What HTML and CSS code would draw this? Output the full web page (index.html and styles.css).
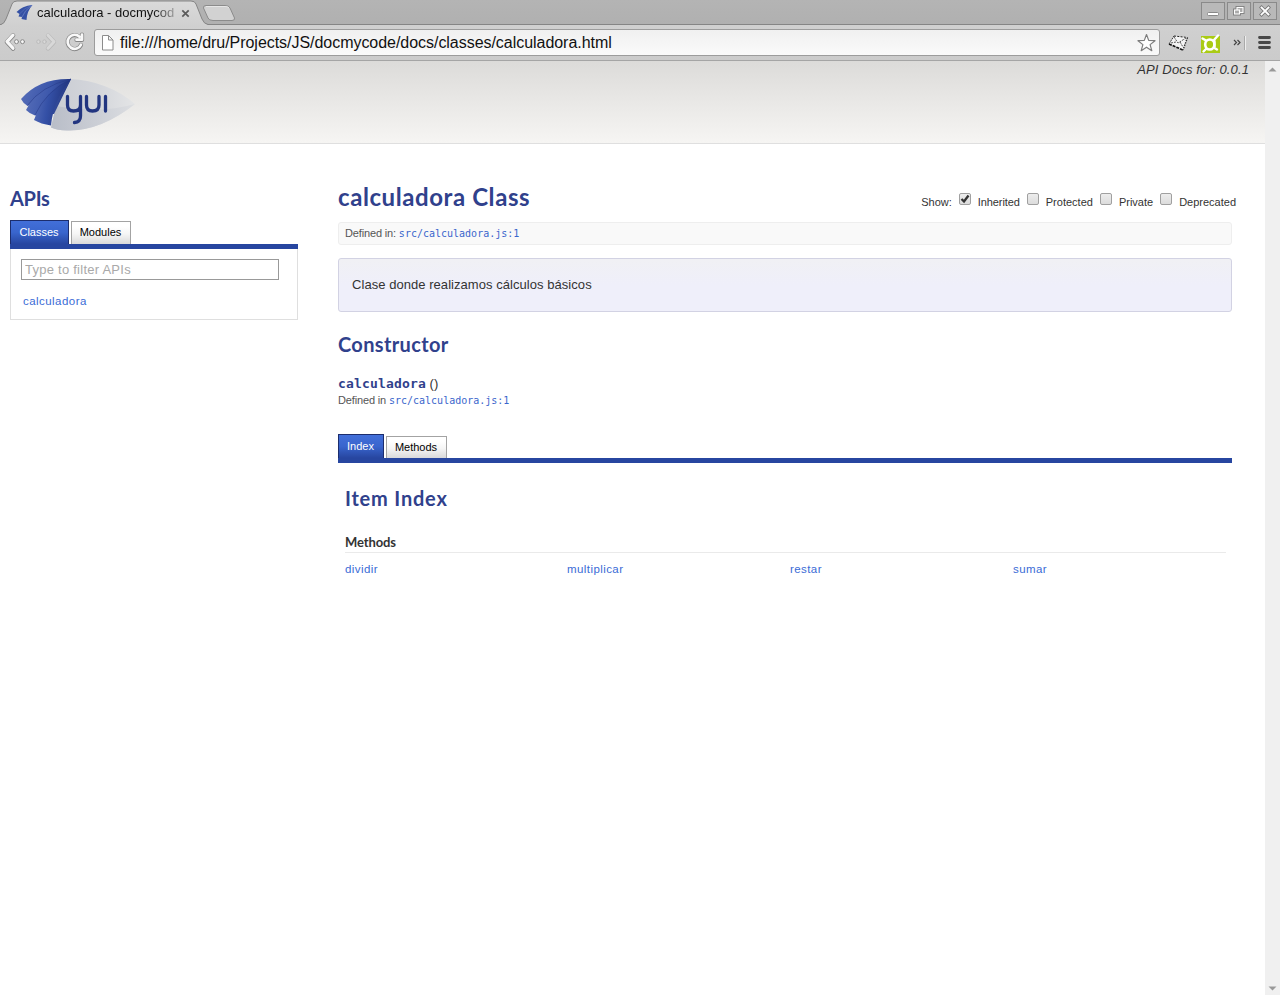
FILE: index.html
```
<!DOCTYPE html>
<html lang="en">
<head>
<meta charset="utf-8">
<title>calculadora - docmycode</title>
<link rel="stylesheet" href="styles.css">
</head>
<body>
<div class="browser">
  <div class="titlebar">
    <svg class="tabshape" width="240" height="25" viewBox="0 0 240 25">
      <defs>
        <linearGradient id="tabg" x1="0" y1="0" x2="0" y2="1"><stop offset="0" stop-color="#dadada"/><stop offset="1" stop-color="#d0d0d0"/></linearGradient>
      </defs>
      <path d="M0 24.500H1Q4 24 6 19L12 4Q13 1 17 1H191Q195 1 196 4L202 19Q204 24 208 24.500V26H0Z" fill="url(#tabg)" stroke="#858585"/>
      <path d="M206 5.500H225Q229 5.500 230 8L234.500 18Q235 20.500 232 20.500H213Q209 20.500 208 18L203.500 8Q203 5.500 206 5.500Z" fill="#d2d2d2" stroke="#8b8b8b"/>
      <path d="M206 6.500H225Q228 6.500 229 8" fill="none" stroke="#e6e6e6"/>
    </svg>
    <div class="tab">
      <svg width="17" height="16" viewBox="0 0 17 16">
        <path d="M0.500 7Q6 1 16.500 0Q11 6 10.500 15L5.500 14L6 12L2.500 11.500L3.500 9Z" fill="#3551a4"/>
        <path d="M3.500 9Q8 3 16 0Q8 6 6 12M6 12Q9 5 16 0" fill="none" stroke="#5f77bf" stroke-width=".6"/>
      </svg>
      <span class="tabtitle">calculadora - docmycod</span>
      <svg class="tabclose" width="9" height="9" viewBox="0 0 9 9"><path d="M1.300 1.300L7.700 7.700M7.700 1.300L1.300 7.700" stroke="#5a5a5a" stroke-width="1.700"/></svg>
    </div>
    <div class="winbtns">
      <svg width="24" height="18" viewBox="0 0 24 18"><rect x=".5" y=".5" width="23" height="17" fill="#b9b9b9" stroke="#8a8a8a"/><rect x="6.500" y="10.500" width="11" height="3" rx="1" fill="#fff" stroke="#888"/></svg>
      <svg width="24" height="18" viewBox="0 0 24 18"><rect x=".5" y=".5" width="23" height="17" fill="#b9b9b9" stroke="#8a8a8a"/><g fill="none" stroke="#808080" stroke-width="3"><rect x="10" y="5.500" width="6" height="5"/><rect x="7.500" y="8" width="5" height="4"/></g><rect x="10" y="5.500" width="6" height="5" fill="#aaa" stroke="#fff" stroke-width="1.100"/><rect x="7.500" y="8" width="5" height="4" fill="#aaa" stroke="#fff" stroke-width="1.100"/></svg>
      <svg width="24" height="18" viewBox="0 0 24 18"><rect x=".5" y=".5" width="23" height="17" fill="#b9b9b9" stroke="#8a8a8a"/><path d="M8.500 5.500L15.500 12.500M15.500 5.500L8.500 12.500" stroke="#777" stroke-width="3.500" stroke-linecap="square"/><path d="M8.500 5.500L15.500 12.500M15.500 5.500L8.500 12.500" stroke="#fff" stroke-width="1.800" stroke-linecap="square"/></svg>
    </div>
  </div>

  <div class="toolbar">
    <svg class="nav" width="90" height="30" viewBox="0 0 90 30">
      <g fill="none" stroke-linecap="round" stroke-linejoin="round">
        <path d="M13 7.500L7 14L13 20.500" stroke="#858585" stroke-width="4.600"/>
        <path d="M13 7.200L7 13.700L13 20.200" stroke="#f8f8f8" stroke-width="3.200"/>
        <g fill="#f6f6f6" stroke="#8b8b8b"><circle cx="16.500" cy="13.700" r="2"/><circle cx="22.500" cy="13.700" r="2"/></g>
        <path d="M48 7.500L54 14L48 20.500" stroke="#b8b8b8" stroke-width="4.300"/>
        <path d="M48 7.200L54 13.700L48 20.200" stroke="#d8d8d8" stroke-width="3.100"/>
        <g fill="#d8d8d8" stroke="#bcbcbc"><circle cx="38.500" cy="13.700" r="1.800"/><circle cx="44.500" cy="13.700" r="1.800"/></g>
        <path d="M79.500 9A7 7 0 1 0 81 17M82 6.500V12H76.500" stroke="#858585" stroke-width="4.200"/>
        <path d="M79.500 8.700A7 7 0 1 0 81 16.700M82 6.500V11.700H76.500" stroke="#f8f8f8" stroke-width="2.700"/>
      </g>
    </svg>
    <div class="omnibox">
      <svg width="13" height="16" viewBox="0 0 13 16"><path d="M1.500 .5H7.500L12 5V15H1.500ZM7.500 .5V5H12" fill="#fff" stroke="#8c8c8c" stroke-linejoin="round"/></svg>
      <span class="url">file:///home/dru/Projects/JS/docmycode/docs/classes/calculadora.html</span>
      <svg width="20" height="20" viewBox="0 0 20 20"><path d="M10.500 1.500L12.700 7.400L19 7.700L14.100 11.600L15.800 17.700L10.500 14.200L5.200 17.700L6.900 11.600L2 7.700L8.300 7.400Z" fill="#fff" stroke="#7d7d7d" stroke-width="1.200" stroke-linejoin="round"/></svg>
    </div>
    <svg class="ext" width="116" height="30" viewBox="0 0 116 30">
      <g transform="translate(8 7)">
        <path d="M6 1L19.500 2.500L15 15L1 9Z" fill="#f4f4f4"/>
        <path d="M6 1L19.500 2.500" stroke="#222" stroke-dasharray="2 1.300"/>
        <path d="M1 9L15 15" stroke="#111" stroke-width="1.600" stroke-dasharray="3 1"/>
        <path d="M19.500 2.500L15 15" stroke="#333" stroke-width="1.400" stroke-dasharray="1.500 1"/>
        <path d="M6 1L1 9" stroke="#222" stroke-dasharray="1.500 1"/>
        <path d="M6 2L10 8L18 3M3 8L8 7M12 7L15 12" fill="none" stroke="#555" stroke-dasharray="2 1"/>
      </g>
      <g transform="translate(40 6)">
        <rect x="1" y="2" width="19" height="17" fill="#aacb14"/>
        <ellipse cx="9.800" cy="10.500" rx="4.600" ry="5" fill="none" stroke="#fff" stroke-width="2.600"/>
        <path d="M14 6L18 1.500M14.500 7V14L17 15.500M6 15L3.500 17.500M6 6.500L2.500 4.500" fill="none" stroke="#fff" stroke-width="2.400" stroke-linecap="round"/>
      </g>
      <path d="M74 12L76.500 14.500L74 17M77.500 12L80 14.500L77.500 17" fill="none" stroke="#444" stroke-width="1.200"/>
      <path d="M84.500 8V22" stroke="#aaa"/><path d="M85.500 8V22" stroke="#eee"/>
      <path d="M99.500 9.500H109.500M99.500 14.500H109.500M99.500 19.500H109.500" stroke="#484848" stroke-width="2.800" stroke-linecap="round"/>
    </svg>
  </div>

  <div class="viewport">
    <div class="page">
      <header class="hd">
        <svg class="logo" width="118" height="54" viewBox="0 0 118 54">
          <defs>
            <linearGradient id="fold1" x1="0" y1="0" x2="1" y2=".2"><stop offset="0" stop-color="#5970ba"/><stop offset=".6" stop-color="#3c57ab"/><stop offset="1" stop-color="#24377f"/></linearGradient>
            <linearGradient id="fold3" x1="0" y1=".6" x2="1" y2=".8"><stop offset="0" stop-color="#5169b6"/><stop offset=".35" stop-color="#3450a6"/><stop offset="1" stop-color="#1b2b70"/></linearGradient>
            <linearGradient id="gray" x1="0" y1="0" x2="1" y2="0"><stop offset="0" stop-color="#c9ccd3"/><stop offset=".6" stop-color="#d5d7dc"/><stop offset="1" stop-color="#e4e5e6"/></linearGradient>
            <linearGradient id="gray2" x1="0" y1="0" x2="1" y2="0"><stop offset="0" stop-color="#b3b8c4"/><stop offset="1" stop-color="#dadce0"/></linearGradient>
          </defs>
          <path d="M50 1Q88 3 115 26Q82 52 50 52.500Q38 53 31 49.500L36 28Z" fill="url(#gray)"/>
          <path d="M36 28Q80 36 115 26Q82 52 50 52.500Q38 53 31 49.500Z" fill="url(#gray2)" opacity=".75"/>
          <path d="M1 21Q19 0 51 1L36 30L7 27.500Q3 25 1 21Z" fill="url(#fold1)"/>
          <path d="M6 32Q18 7 51 1L34 36L15 37.500Q10 36 6 32Z" fill="url(#fold1)"/>
          <path d="M14 42Q24 13 51 1Q33 23 31 47.500Q21 46 14 42Z" fill="url(#fold3)"/>
          <path d="M7 28Q21 8 51 1M15 37Q26 13 51 1" stroke="#263a88" stroke-width=".8" fill="none" opacity=".7"/>
          <g fill="none" stroke="#223580" stroke-width="3.300" stroke-linecap="round"><path d="M47.500 18.500V27Q47.500 33 53.500 33Q60.500 33 60.500 27V18.500M60.500 27V38Q60.500 44 54.500 44.500M66.500 18.500V27Q66.500 33 72.500 33Q79 33 79 27V18.500M85.500 18.500V33"/></g>
        </svg>
        <em class="version">API Docs for: 0.0.1</em>
      </header>
      <div class="cols">
        <aside class="side">
          <h2 class="t-apis">APIs</h2>
          <div class="tabs"><span class="tb on w59">Classes</span><span class="tb w60">Modules</span></div>
          <div class="panel">
            <input class="filter" type="text" placeholder="Type to filter APIs">
            <a class="api">calculadora</a>
          </div>
        </aside>
        <main class="main">
          <div class="top">
            <h1>calculadora Class</h1>
            <div class="opts">
              <span class="show">Show:</span>
              <label class="o1"><svg class="cb" viewBox="0 0 10 10"><path d="M1.500 5L4 7.500L8.500 1.500" fill="none" stroke="#333" stroke-width="2.300"/></svg>Inherited</label>
              <label class="o2"><i class="cb"></i>Protected</label>
              <label class="o3"><i class="cb"></i>Private</label>
              <label class="o4"><i class="cb"></i>Deprecated</label>
            </div>
          </div>
          <div class="defined box">Defined in: <code>src/calculadora.js:1</code></div>
          <div class="desc">Clase donde realizamos cálculos básicos</div>
          <h2 class="t-cons">Constructor</h2>
          <div class="sig"><code>calculadora</code> <span>()</span></div>
          <div class="defined">Defined in <code>src/calculadora.js:1</code></div>
          <div class="tabs second"><span class="tb on w46">Index</span><span class="tb w61">Methods</span></div>
          <section class="index">
            <h2 class="t-item">Item Index</h2>
            <h3>Methods</h3>
            <div class="methods"><a>dividir</a><a>multiplicar</a><a>restar</a><a>sumar</a></div>
          </section>
        </main>
      </div>
    </div>
    <div class="scroll">
      <svg width="9" height="5" viewBox="0 0 9 5"><path d="M.5 4.500L4.500 .5L8.500 4.500Z" fill="#999"/></svg>
      <svg width="9" height="5" viewBox="0 0 9 5"><path d="M.5 .5L4.500 4.500L8.500 .5Z" fill="#999"/></svg>
    </div>
  </div>
</div>
</body>
</html>
```
FILE: styles.css
```
* { box-sizing: border-box; }
body { margin: 0; background: #fff; color: #333; font-family: "Liberation Sans", Arial, sans-serif; overflow: hidden; }
svg { display: block; flex: none; }
h1, h2, h3 { margin: 0; font-family: "Trebuchet MS", Lato, sans-serif; font-weight: 700; white-space: nowrap; color: #30418c; }
code { font-family: "DejaVu Sans Mono", monospace; }
.browser { width: 1280px; height: 995px; display: flex; flex-direction: column; }
.titlebar { position: relative; height: 25px; flex: none; display: flex; justify-content: space-between; background: linear-gradient(#b4b4b4, #b0b0b0); border-bottom: 1px solid #858585; }
.tabshape { position: absolute; left: 0; top: 0; }
.tab { position: relative; display: flex; align-items: flex-start; padding: 5px 0 0 16px; }
.tabtitle { width: 138px; margin-left: 4px; white-space: nowrap; font-size: 13px; line-height: 16px; color: #111; -webkit-mask-image: linear-gradient(90deg, #000 84%, #0004); mask-image: linear-gradient(90deg, #000 84%, #0004); }
.tabclose { margin: 4px 0 0 6px; }
.winbtns { display: flex; gap: 2px; padding: 2px 3px 0 0; }
.toolbar { height: 36px; flex: none; display: flex; background: linear-gradient(#d0d0d0, #cbcbcb); border-bottom: 1px solid #a5a5a5; }
.nav { margin-top: 3px; }
.omnibox { width: 1066px; height: 27px; margin: 4px 0 0 4px; border: 1px solid #9c9c9c; border-radius: 3px; background: linear-gradient(#f0f0f0, #fafafa); display: flex; align-items: center; padding: 0 3px 0 6px; }
.url { flex: 1; margin-left: 6px; font-size: 16px; line-height: 22px; letter-spacing: -.04px; color: #111; white-space: nowrap; }
.ext { margin-top: 3px; }
.viewport { flex: 1; display: flex; }
.page { width: 1265px; }
.scroll { width: 15px; background: #f0f0f0; display: flex; flex-direction: column; justify-content: space-between; padding: 6px 0 4px 3px; }
.hd { height: 83px; display: flex; justify-content: space-between; background: linear-gradient(#dcdbd9, #f6f5f3); border-bottom: 1px solid #dfdfdf; padding: 0 16px 0 20px; }
.logo { margin-top: 17px; }
.version { font-size: 13px; line-height: 17px; letter-spacing: .14px; color: #333; }
.cols { display: flex; padding: 41px 0 0 10px; gap: 40px; }
.side { width: 288px; }
.t-apis { font-size: 20px; line-height: 26px; height: 35px; letter-spacing: -.3px; }
.tabs { height: 29px; display: flex; align-items: flex-end; gap: 2px; border-bottom: 5px solid #2746a0; }
.tb { height: 23px; border: 1px solid #a3a3a3; border-bottom: 0; background: linear-gradient(#fff 20%, #f5f5f5 55%, #dadada); color: #000; font-size: 11px; line-height: 20px; text-align: center; padding-right: 1px; }
.tb.on { height: 24px; border-color: #1c2d6d; background: linear-gradient(#426fd9, #3965cd 50%, #2746a0); color: #fff; line-height: 23px; }
.w59 { width: 59px; } .w60 { width: 60px; } .w46 { width: 46px; } .w61 { width: 61px; }
.second .tb { height: 22px; }
.second .tb.on { height: 24px; }
.panel { height: 71px; border: 1px solid #dfdfdf; border-top: 0; padding: 10px 0 0 10px; }
.filter { display: block; width: 258px; height: 21px; border: 1px solid #999; padding: 0 3px; font: 13px "Liberation Sans", sans-serif; letter-spacing: .25px; }
.filter::placeholder { color: #a9a9a9; }
.api { display: block; margin: 13px 0 0 2px; font-size: 11.500px; line-height: 16px; letter-spacing: .45px; color: #3a6bd6; }
.main { width: 894px; }
.top { height: 37px; display: flex; justify-content: space-between; }
h1 { font-size: 24px; line-height: 24px; letter-spacing: .58px; }
.opts { display: flex; font-size: 11px; line-height: 16px; padding-top: 9px; margin-right: -4px; }
.opts label { display: flex; }
.show { margin-right: 7px; }
.cb { display: block; width: 12px; height: 12px; margin-right: 7px; margin-top: -1px; flex: none; border: 1px solid #a0a0a0; border-radius: 2px; background: linear-gradient(#ededed, #dcdcdc); }
.o1, .o2, .o3 { margin-right: 7px; }
.o1 { letter-spacing: -.1px; }
.defined { font-size: 11px; line-height: 16px; letter-spacing: -.15px; color: #555; white-space: nowrap; }
.defined code { font-size: 10px; letter-spacing: 0; color: #3a66cc; }
.box { height: 23px; line-height: 21px; border: 1px solid #eee; border-radius: 3px; background: #f9f9f9; padding-left: 6px; }
.desc { margin-top: 13px; height: 54px; border: 1px solid #d2d2e3; border-radius: 3px; background: linear-gradient(#f0f0f4, #efeffa 50%); padding-left: 13px; font-size: 13px; line-height: 52px; letter-spacing: .05px; color: #333; }
.t-cons { font-size: 20px; line-height: 26px; margin-top: 19px; letter-spacing: .35px; }
.sig { font-size: 13px; line-height: 16px; margin-top: 19px; white-space: nowrap; }
.sig code { font-weight: 700; font-size: 13px; letter-spacing: .17px; color: #30418c; }
.second { margin-top: 25px; }
.index { padding: 22px 6px 0 7px; }
.t-item { font-size: 20px; line-height: 26px; letter-spacing: .8px; }
h3 { font-size: 13px; line-height: 18px; height: 20px; margin-top: 22px; letter-spacing: -.1px; color: #333; border-bottom: 1px solid #eaeaea; }
.methods { display: grid; grid-template-columns: 222px 223px 223px auto; padding-top: 8px; font-size: 11.500px; line-height: 16px; letter-spacing: .42px; color: #3a6bd6; }
```
